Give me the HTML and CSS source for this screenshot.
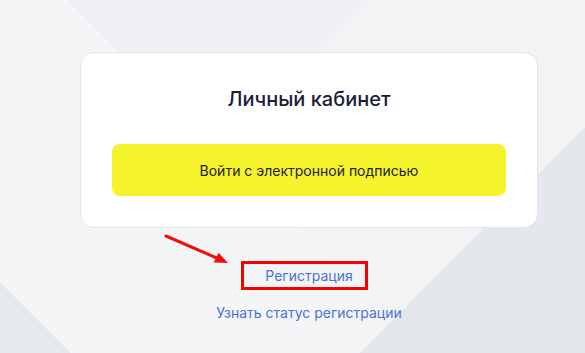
FILE: index.html
```html
<!DOCTYPE html>
<html lang="ru">
<head>
  <meta charset="UTF-8" />
  <meta name="viewport" content="width=device-width, initial-scale=1.0"/>
  <title>Личный кабинет</title>
  <link rel="stylesheet" href="styles.css">
</head>
<body>

  <div class="page">
    <!-- Login card -->
    <div class="card">
      <h1>Личный кабинет</h1>
      <button class="sign-btn">Войти с электронной подписью</button>
    </div>

    <!-- Links under card -->
    <div class="links">
      <a href="#" class="reg-link">Регистрация</a>
      <a href="#" class="status-link">Узнать статус регистрации</a>
    </div>
  </div>

  <!-- Annotation arrow -->
  <svg class="arrow" width="80" height="40" viewBox="160 230 80 40">
    <line x1="166" y1="236" x2="218" y2="258.5" stroke="#f01010" stroke-width="3" stroke-linecap="round"/>
    <polygon points="228,263 213.6,262.6 218.6,252.8" fill="#f01010"/>
  </svg>

</body>
</html>
```

FILE: styles.css
```css
* {
  box-sizing: border-box;
}
html, body {
  height: 100%;
}
body {
  margin: 0;
  font-family: Inter, 'Noto Sans', sans-serif;
  background:
    linear-gradient(135deg, transparent 76%, #e4e7eb 76%),
    linear-gradient(45deg, #e6e9ec 7.5%, #f4f5f7 7.5%, #f4f5f7 44.8%, transparent 44.8%),
    linear-gradient(135deg, #eef0f3 39%, #f2f3f5 39%);
  overflow: hidden;
}
.page {
  width: 538px;
  padding: 52px 0 0 80px;
}
.card {
  background: #fff;
  border: 1px solid #dfe5ee;
  border-radius: 14px;
  padding: 34px 31px 31px;
  display: flex;
  flex-direction: column;
  align-items: center;
}
.card h1 {
  margin: 0;
  font-size: 20px;
  line-height: 24px;
  font-weight: 500;
  color: #1a1d38;
}
.sign-btn {
  margin-top: 33px;
  width: 100%;
  height: 52px;
  border: none;
  border-radius: 8px;
  background: #f5f32c;
  color: #222;
  font-family: inherit;
  font-size: 14px;
  cursor: pointer;
}
.links {
  margin-top: 33px;
  display: flex;
  flex-direction: column;
  align-items: center;
}
.links a {
  color: #4a72d3;
  text-decoration: none;
  font-size: 14px;
  line-height: 17px;
}
/* red highlight box */
.reg-link {
  border: 3px solid #f70000;
  padding: 3px 12px 3px 21px;
  margin-right: 9px;
}
.status-link {
  margin-top: 14px;
}
.arrow {
  position: absolute;
  left: 160px;
  top: 230px;
}
```
